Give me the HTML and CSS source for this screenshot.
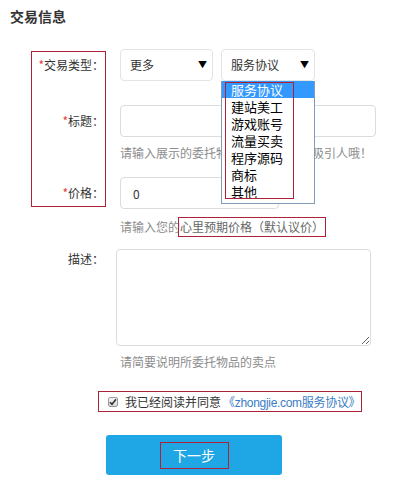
FILE: index.html
```html
<!DOCTYPE html>
<html lang="zh-CN">
<head>
    <meta charset="UTF-8">
    <meta name="viewport" content="width=device-width, initial-scale=1.0">
    <title>交易信息</title>
    <link rel="stylesheet" href="styles.css">
</head>
<body>
    <h3 class="section-title">交易信息</h3>

    <form class="trade-form">
        <div class="mark mark-labels"></div>

        <div class="row">
            <label class="label"><em>*</em>交易类型：</label>
            <div class="select select-type">更多<span class="arrow">▼</span></div>
            <div class="select select-sub">服务协议<span class="arrow">▼</span></div>
        </div>

        <ul class="dropdown">
            <li class="active">服务协议</li>
            <li>建站美工</li>
            <li>游戏账号</li>
            <li>流量买卖</li>
            <li>程序源码</li>
            <li>商标</li>
            <li>其他</li>
            <span class="mark mark-options"></span>
        </ul>

        <div class="row row-title">
            <label class="label"><em>*</em>标题：</label>
            <input class="input input-title" type="text">
        </div>
        <p class="hint">请输入展示的委托物品标题，要简洁吸引人哦！</p>

        <div class="row row-price">
            <label class="label"><em>*</em>价格：</label>
            <input class="input input-price" type="text" value="0">
        </div>
        <p class="hint hint-price">请输入您的<span class="boxed">心里预期价格（默认议价）</span></p>

        <div class="row row-desc">
            <label class="label label-desc">描述：</label>
            <textarea class="textarea"></textarea>
        </div>
        <p class="hint hint-desc">请简要说明所委托物品的卖点</p>

        <div class="agree">
            <span class="checkbox">
                <svg width="8" height="8" viewBox="0 0 8 8"><path d="M1 4.2 L3 6.3 L7 1.3" fill="none" stroke="#333" stroke-width="1.6"/></svg>
            </span>
            <span>我已经阅读并同意</span>
            <a href="#" class="link">《zhongjie.com服务协议》</a>
        </div>

        <button type="button" class="next-btn"><span class="boxed-btn">下一步</span></button>
    </form>
</body>
</html>
```

FILE: styles.css
```css
:root {
    --text: #333;
    --hint: #8c8c8c;
    --border: #dcdcdc;
    --mark: #ad2237;
    --primary: #1fa6e4;
    --link: #3a7cc4;
}

body {
    margin: 0;
    font-family: "Microsoft YaHei", "Noto Sans CJK SC", sans-serif;
    font-size: 12px;
    color: var(--text);
    background: #fff;
}

.section-title {
    margin: 0;
    padding: 7px 10px 0;
    font-size: 14px;
    line-height: 18px;
    font-weight: bold;
}

.trade-form {
    position: relative;
    margin-top: 24px;
    display: flex;
    flex-direction: column;
}

.row {
    display: flex;
    align-items: center;
    height: 32px;
}

.label {
    width: 104px;
    margin-right: 16px;
    text-align: right;
    line-height: 20px;
}

.label em {
    font-style: normal;
    color: #e4393c;
}

.select {
    position: relative;
    box-sizing: border-box;
    height: 32px;
    padding-left: 9px;
    border: 1px solid #e3e3e3;
    border-radius: 4px;
    line-height: 30px;
    font-size: 12px;
}

.select-type {
    width: 93px;
    margin-right: 8px;
}

.select-sub {
    width: 94px;
}

.arrow {
    position: absolute;
    right: 5px;
    top: 0;
    font-size: 9px;
    color: #000;
}

.dropdown {
    position: absolute;
    top: 32px;
    left: 221px;
    width: 94px;
    margin: 0;
    padding: 0 0 3px;
    box-sizing: border-box;
    list-style: none;
    background: #fff;
    border: 1px solid #7f9db9;
    border-top: none;
    z-index: 2;
}

.dropdown li {
    height: 17px;
    padding-left: 9px;
    line-height: 17px;
    font-size: 13px;
    color: #000;
}

.dropdown li.active {
    background: #3399ff;
    color: #fff;
}

.mark {
    position: absolute;
    border: 1px solid var(--mark);
    box-sizing: border-box;
    pointer-events: none;
}

.mark-labels {
    left: 31px;
    top: 2px;
    width: 75px;
    height: 156px;
}

.mark-options {
    left: 3px;
    top: 1px;
    width: 69px;
    height: 117px;
}

.input {
    box-sizing: border-box;
    height: 32px;
    border: 1px solid var(--border);
    border-radius: 4px;
    padding: 0 12px;
    font-family: inherit;
    font-size: 12px;
    color: var(--text);
    outline: none;
}

.row-title {
    margin-top: 24px;
}

.input-title {
    width: 256px;
}

.input-price {
    width: 159px;
}

.hint {
    margin: 6px 0 0 120px;
    line-height: 20px;
    color: var(--hint);
}

.row-price {
    margin-top: 14px;
}

.hint-price {
    margin-top: 8px;
}

.boxed {
    display: inline-block;
    margin-left: -2px;
    padding: 0 1px;
    line-height: 18px;
    border: 1px solid var(--mark);
    color: #666;
}

.row-desc {
    margin-top: 12px;
    height: auto;
    align-items: flex-start;
}

.label-desc {
    margin-right: 12px;
    line-height: 20px;
}

.textarea {
    box-sizing: border-box;
    width: 255px;
    height: 97px;
    border: 1px solid var(--border);
    border-radius: 4px;
    font-family: inherit;
    outline: none;
}

.hint-desc {
    margin-top: 6px;
}

.agree {
    align-self: flex-start;
    display: flex;
    align-items: center;
    box-sizing: border-box;
    height: 21px;
    margin: 19px 0 0 98px;
    padding: 0 1px 0 9px;
    border: 1px solid var(--mark);
    font-size: 12px;
}

.checkbox {
    display: inline-flex;
    align-items: center;
    justify-content: center;
    box-sizing: border-box;
    width: 10px;
    height: 10px;
    margin-right: 7px;
    border: 1px solid #9a9a9a;
    border-radius: 2px;
    background: linear-gradient(#f4f4f4, #d8d8d8);
}

.link {
    margin-left: 2px;
    font-family: "Liberation Sans", "Noto Sans CJK SC", sans-serif;
    letter-spacing: -0.3px;
    color: var(--link);
    text-decoration: none;
}

.next-btn {
    align-self: flex-start;
    width: 176px;
    height: 40px;
    margin: 23px 0 0 106px;
    border: none;
    border-radius: 3px;
    background: var(--primary);
    color: #fff;
    font-family: inherit;
    font-size: 14px;
    cursor: pointer;
}

.boxed-btn {
    display: inline-block;
    box-sizing: border-box;
    width: 69px;
    height: 27px;
    line-height: 25px;
    border: 1px solid var(--mark);
}
```
